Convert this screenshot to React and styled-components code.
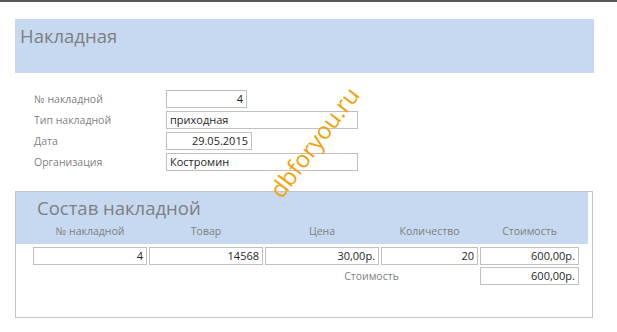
import React from 'react';
import styled, { createGlobalStyle } from 'styled-components';

const GlobalStyle = createGlobalStyle`
  body {
    margin: 0;
    background: #ffffff;
    font-family: "Open Sans", "Liberation Sans", sans-serif;
  }
`;

const Page = styled.div`
  position: relative;
  width: 617px;
  height: 332px;
  overflow: hidden;
  border-top: 2px solid #5a5a5a;
  box-sizing: border-box;
`;

const Header = styled.div`
  margin: 17px 0 0 15px;
  width: 579px;
  height: 54px;
  background: #c6d9f1;
  box-sizing: border-box;
  padding: 4px 0 0 5px;
  font-size: 18.5px;
  color: #7f7f7f;
`;

const Fields = styled.div`
  display: grid;
  grid-template-columns: 132px auto;
  row-gap: 3px;
  margin: 17px 0 0 34px;
`;

const Label = styled.div`
  font-size: 10.5px;
  color: #7f7f7f;
  line-height: 18px;
`;

const Field = styled.div`
  width: ${(p) => p.w}px;
  height: 18px;
  box-sizing: border-box;
  border: 1px solid #c0c0c0;
  font-size: 11px;
  line-height: 16px;
  color: #262626;
  padding: 0 3px;
  text-align: ${(p) => (p.right ? 'right' : 'left')};
`;

const Sub = styled.div`
  margin: 20px 0 0 15px;
  width: 578px;
  height: 127px;
  box-sizing: border-box;
  border: 1px solid #c4c4c4;
  padding-right: 4px;
`;

const SubHead = styled.div`
  background: #c6d9f1;
  height: 52px;
  padding: 4px 0 0 21px;
  box-sizing: border-box;
`;

const SubTitle = styled.div`
  font-size: 18.5px;
  color: #7f7f7f;
  line-height: 24px;
`;

const Table = styled.div`
  display: grid;
  grid-template-columns: 114px 114px 114px 97px 99px;
  column-gap: 2px;
  margin-left: ${(p) => p.offset}px;
  row-gap: 2px;
`;

const ColHead = styled.div`
  font-size: 10.5px;
  color: #7f7f7f;
  text-align: center;
  line-height: 16px;
  margin-top: 3px;
`;

const Cell = styled(Field)`
  width: auto;
`;

const TotalLabel = styled.div`
  grid-column: 3 / 5;
  font-size: 10.5px;
  color: #7f7f7f;
  text-align: center;
  line-height: 18px;
`;

const Watermark = styled.div`
  position: absolute;
  left: 314px;
  top: 140px;
  transform: translate(-50%, -50%) rotate(-53deg);
  font-size: 23.5px;
  color: #f0a30a;
  white-space: nowrap;
`;

const cols = ['№ накладной', 'Товар', 'Цена', 'Количество', 'Стоимость'];
const row = ['4', '14568', '30,00р.', '20', '600,00р.'];

export default function App() {
  return (
    <>
      <GlobalStyle />
      <Page>
        <Header>Накладная</Header>
        <Fields>
          <Label>№ накладной</Label>
          <Field w={81} right>4</Field>
          <Label>Тип накладной</Label>
          <Field w={192}>приходная</Field>
          <Label>Дата</Label>
          <Field w={86} right>29.05.2015</Field>
          <Label>Организация</Label>
          <Field w={192}>Костромин</Field>
        </Fields>
        <Sub>
          <SubHead>
            <SubTitle>Состав накладной</SubTitle>
            <Table offset={-4}>
              {cols.map((c) => (
                <ColHead key={c}>{c}</ColHead>
              ))}
            </Table>
          </SubHead>
          <Table offset={17} style={{ marginTop: 3 }}>
            {row.map((v, i) => (
              <Cell key={i} right>{v}</Cell>
            ))}
            <TotalLabel>Стоимость</TotalLabel>
            <Cell right style={{ gridColumn: 5 }}>600,00р.</Cell>
          </Table>
        </Sub>
        <Watermark>dbforyou.ru</Watermark>
      </Page>
    </>
  );
}
